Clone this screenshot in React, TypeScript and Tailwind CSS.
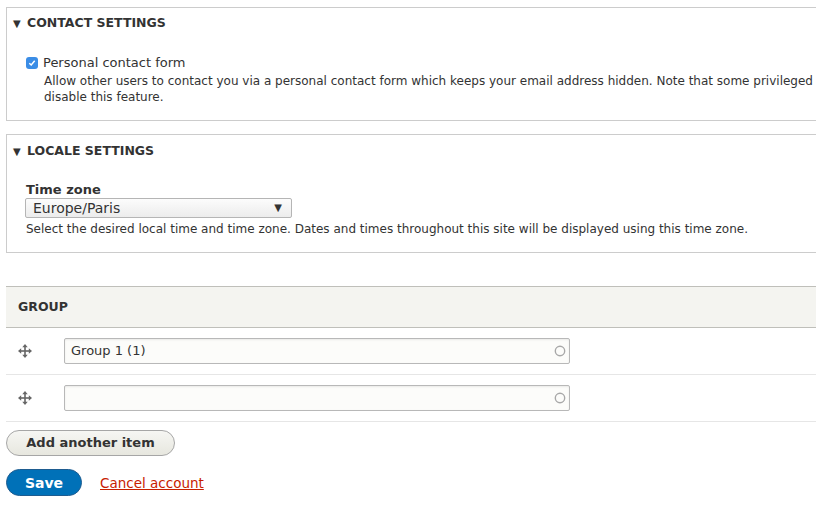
import React from "react";

const DragIcon = () => (
  <svg width="14" height="14" viewBox="0 0 14 14" fill="#666">
    <rect x="6.2" y="2" width="1.6" height="10" />
    <rect x="2" y="6.2" width="10" height="1.6" />
    <polygon points="7,0 4.3,3.2 9.7,3.2" />
    <polygon points="7,14 4.3,10.8 9.7,10.8" />
    <polygon points="0,7 3.2,4.3 3.2,9.7" />
    <polygon points="14,7 10.8,4.3 10.8,9.7" />
  </svg>
);

const Throbber = () => (
  <svg width="12" height="12" viewBox="0 0 12 12" className="absolute right-[3px] top-1/2 -translate-y-1/2">
    <circle cx="6" cy="6" r="4.7" fill="none" stroke="#a8a8a8" strokeWidth="1.4" />
  </svg>
);

export default function App() {
  return (
    <div
      className="w-[816px] h-[516px] overflow-hidden bg-white text-[#333]"
      style={{ fontFamily: '"DejaVu Sans", "Lucida Grande", Verdana, sans-serif' }}
    >
      <div className="w-[860px] pl-[6px] pt-[7px]">
        <fieldset className="border border-[#ccc] h-[114px] px-[19px]">
          <div className="flex items-center pt-[1px] -ml-[13px] h-[22px] mt-[4px]">
            <span className="text-[10px] w-[14px] leading-none text-[#333]">▼</span>
            <span className="font-bold text-[12.5px] uppercase">Contact settings</span>
          </div>
          <div className="mt-[20px] flex items-center h-[18px]">
            <span className="w-[12px] h-[12px] rounded-[3px] bg-[#3b8de6] flex items-center justify-center mr-[5px]">
              <svg width="8" height="8" viewBox="0 0 8 8">
                <path d="M1.3 4.2 L3.2 6 L6.7 1.8" fill="none" stroke="white" strokeWidth="1.5" />
              </svg>
            </span>
            <span className="text-[13px]">Personal contact form</span>
          </div>
          <div className="pl-[18px] text-[12px] leading-[16px] text-[#333] mt-[1px] whitespace-nowrap">
            Allow other users to contact you via a personal contact form which keeps your email address hidden. Note that some privileged users
            <br />
            disable this feature.
          </div>
        </fieldset>

        <fieldset className="border border-[#ccc] h-[119px] px-[19px] mt-[13px]">
          <div className="flex items-center pt-[3px] -ml-[13px] h-[22px] mt-[4px]">
            <span className="text-[10px] w-[14px] leading-none text-[#333]">▼</span>
            <span className="font-bold text-[12.5px] uppercase">Locale settings</span>
          </div>
          <div className="mt-[20px] font-bold text-[13px] leading-[17px]">Time zone</div>
          <div className="w-[267px] h-[20px] border border-[#b5b5b5] rounded-[2px] bg-gradient-to-b from-[#fcfcfc] to-[#ececec] flex items-center justify-between px-[7px] -ml-[1px]">
            <span className="text-[14px] leading-none text-[#333]">Europe/Paris</span>
            <span className="text-[10px] leading-none text-[#333] mr-[2px]">▼</span>
          </div>
          <div className="text-[12px] leading-[16px] mt-[3px] whitespace-nowrap">
            Select the desired local time and time zone. Dates and times throughout this site will be displayed using this time zone.
          </div>
        </fieldset>

        <div className="mt-[33px]">
          <div className="h-[42px] bg-[#f4f4f0] border-t border-b border-[#bfbfba] flex items-center pl-[12px]">
            <span className="font-bold text-[12.5px] uppercase text-[#333]">Group</span>
          </div>
          <div className="h-[47px] border-b border-[#e6e6e6] flex items-center">
            <span className="w-[58px] pl-[12px] flex"><DragIcon /></span>
            <div className="relative w-[506px] h-[26px] border border-[#b8b8b8] rounded-[2px] bg-[#fcfcfa] flex items-center pl-[6px] shadow-[inset_0_1px_2px_rgba(0,0,0,0.08)]">
              <span className="text-[13px]">Group 1 (1)</span>
              <Throbber />
            </div>
          </div>
          <div className="h-[47px] border-b border-[#e6e6e6] flex items-center">
            <span className="w-[58px] pl-[12px] flex"><DragIcon /></span>
            <div className="relative w-[506px] h-[26px] border border-[#b8b8b8] rounded-[2px] bg-[#fcfcfa] shadow-[inset_0_1px_2px_rgba(0,0,0,0.08)]">
              <Throbber />
            </div>
          </div>
        </div>

        <div className="mt-[8px]">
          <button className="h-[26px] w-[169px] rounded-full border border-[#a6a6a6] bg-gradient-to-b from-[#f6f6f3] to-[#e7e7df] text-[13px] font-bold text-[#333] flex items-center justify-center">
            Add another item
          </button>
        </div>
        <div className="mt-[13px] flex items-center">
          <button className="h-[27px] w-[76px] rounded-full bg-[#0071b8] border border-[#1e5c90] text-white text-[14px] font-bold flex items-center justify-center pt-[1px]">
            Save
          </button>
          <a className="ml-[18px] text-[13.5px] text-[#c72100] underline pt-[1px]">Cancel account</a>
        </div>
      </div>
    </div>
  );
}
